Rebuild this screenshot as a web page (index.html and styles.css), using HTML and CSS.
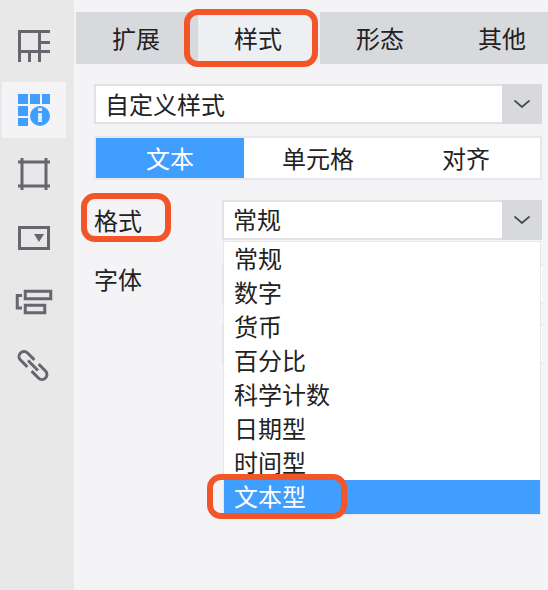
FILE: index.html
```html
<!DOCTYPE html>
<html lang="zh-CN">
<head>
<meta charset="UTF-8">
<title>样式设置</title>
<meta name="viewport" content="width=device-width, initial-scale=1">
<link rel="stylesheet" href="styles.css">
</head>

<body>
<div class="app">
  <div class="sidebar">
    <div class="side-item">
      <svg class="side-icon" viewBox="0 0 32 32"><path d="M1.5 32V1.5H32M21.5 1.5V32M21.5 12.5H32M0 21.5H32M11.5 21.5V32"/></svg>
    </div>
    <div class="side-item active">
      <svg class="side-icon" viewBox="0 0 32 32">
        <g class="fill-blue">
          <rect x="0" y="0" width="10" height="10"/>
          <rect x="12" y="0" width="10" height="10"/>
          <rect x="24" y="0" width="8" height="10"/>
          <rect x="0" y="12" width="10" height="10"/>
          <rect x="0" y="24" width="10" height="8"/>
          <circle cx="22" cy="22" r="10"/>
        </g>
        <g class="fill-pale">
          <rect x="20" y="14" width="4" height="3"/>
          <rect x="20" y="19" width="4" height="9"/>
        </g>
      </svg>
    </div>
    <div class="side-item">
      <svg class="side-icon" viewBox="0 0 32 32"><path d="M0 4H32M0 28H32M4 0V32M28 0V32"/></svg>
    </div>
    <div class="side-item">
      <svg class="side-icon" viewBox="0 0 32 32">
        <rect x="1.5" y="5.5" width="29" height="21"/>
        <polygon class="fill-gray" points="16,12 26,12 21,20"/>
      </svg>
    </div>
    <div class="side-item">
      <svg class="side-icon" viewBox="0 0 32 32">
        <rect x="7.25" y="5.25" width="25.5" height="7.5"/>
        <rect x="7.25" y="19.25" width="19.5" height="7.5"/>
        <path d="M4 9.5H-.75V22H4"/>
      </svg>
    </div>
    <div class="side-item">
      <svg class="side-icon" viewBox="0 0 32 32">
        <g transform="translate(-1 -.5) rotate(-45 16 16)">
          <path d="M11 13V3.3a5 5 0 0 1 10 0V13M11 19V28.7a5 5 0 0 0 10 0V19M16 9V23"/>
        </g>
      </svg>
    </div>
  </div>

  <div class="panel">
    <div class="tab-bar">
      <div class="tab">扩展</div>
      <div class="tab active">样式<span class="ring ring-tab"></span></div>
      <div class="tab">形态</div>
      <div class="tab">其他</div>
    </div>

    <div class="select style-select">
      <span class="select-text">自定义样式</span>
      <span class="select-arrow"><svg viewBox="0 0 16 8"><path d="M.5 .5L8 7L15.5 .5"/></svg></span>
    </div>

    <div class="sub-tabs">
      <div class="sub-tab active">文本</div>
      <div class="sub-tab">单元格</div>
      <div class="sub-tab">对齐</div>
    </div>

    <div class="form-row format-row">
      <div class="form-label">格式<span class="ring ring-label"></span></div>
      <div class="select">
        <span class="select-text">常规</span>
        <span class="select-arrow"><svg viewBox="0 0 16 8"><path d="M.5 .5L8 7L15.5 .5"/></svg></span>
        <ul class="dropdown">
          <li>常规</li>
          <li>数字</li>
          <li>货币</li>
          <li>百分比</li>
          <li>科学计数</li>
          <li>日期型</li>
          <li>时间型</li>
          <li class="active">文本型<span class="ring ring-item"></span></li>
        </ul>
      </div>
    </div>

    <div class="form-row font-row">
      <div class="form-label">字体</div>
      <div class="select"></div>
    </div>

    <div class="form-row size-row">
      <div class="form-label"></div>
      <div class="select"></div>
    </div>
  </div>
</div>
</body>
</html>
```

FILE: styles.css
```css
html, body {
  margin: 0;
  height: 100%;
  overflow: hidden;
}

body {
  font-family: "Noto Sans CJK SC", "Liberation Sans", sans-serif;
  font-size: 24px;
  color: #222;
  background: #f4f4f7;
}

.app {
  display: flex;
  height: 100vh;
  overflow: hidden;
}

/* left icon column */
.sidebar {
  flex: none;
  width: 74px;
  box-sizing: border-box;
  padding: 18px 0 0 2px;
  background: #e8e8e8;
  display: flex;
  flex-direction: column;
  gap: 8px;
  height: 100%;
}
.side-item {
  width: 64px;
  height: 56px;
  display: flex;
  justify-content: center;
  align-items: center;
}
.side-item.active {
  background: #f4f4f7;
}
.side-icon {
  width: 32px;
  height: 32px;
  overflow: visible;
  fill: none;
  stroke: #66666f;
  stroke-width: 3;
}
.fill-blue {
  fill: #409eff;
  stroke: none;
}
.fill-pale {
  fill: #d9ecff;
  stroke: none;
}
.fill-gray {
  fill: #66666f;
  stroke: none;
}

.panel {
  flex: 1;
  min-width: 0;
  padding: 12px 6px 0 20px;
}

/* top tabs */
.tab-bar {
  display: flex;
  height: 52px;
  margin: 0 -6px 0 -18px;
  background: #d8d9dd;
}
.tab {
  flex: none;
  width: 122px;
  box-sizing: border-box;
  padding: 0 2px 2px 0;
  position: relative;
  display: flex;
  justify-content: center;
  align-items: center;
}
.tab.active {
  background: #eeeff2;
}

/* orange annotation frames */
.ring {
  position: absolute;
  box-sizing: border-box;
  border: 6px solid #f25528;
  border-radius: 14px;
}
.ring-tab {
  left: -14px;
  top: -3px;
  width: 134px;
  height: 58px;
}
.ring-label {
  left: -13px;
  top: -7px;
  width: 90px;
  height: 49px;
}
.ring-item {
  left: -17px;
  top: -6px;
  width: 140px;
  height: 45px;
}

/* selects */
.select {
  position: relative;
  display: flex;
  height: 40px;
  box-sizing: border-box;
  background: #fff;
  border: 2px solid #e2e2e4;
  border-right: 0;
}
.style-select {
  margin-top: 20px;
}
.select-text {
  flex: 1;
  padding-left: 9px;
  line-height: 34px;
}
.style-select .select-text {
  line-height: 36px;
}
.select-arrow {
  flex: none;
  width: 40px;
  margin: -2px 0;
  background: #d8d9dd;
  display: flex;
  justify-content: center;
  align-items: center;
}
.select-arrow svg {
  width: 16px;
  height: 8px;
  fill: none;
  stroke: #44444c;
  stroke-width: 1.7;
}

.sub-tabs {
  display: grid;
  grid-template-columns: repeat(3, 148px);
  margin-top: 12px;
  background: #fff;
  border: 2px solid #e8e8ea;
}
.sub-tab {
  height: 40px;
  line-height: 40px;
  text-align: center;
}
.sub-tab.active {
  background: #409eff;
  color: #fff;
}

.form-row {
  display: grid;
  grid-template-columns: 128px 1fr;
}
.format-row {
  margin-top: 20px;
}
.font-row {
  margin-top: 24px;
}
.size-row {
  margin-top: 20px;
}
.form-label {
  position: relative;
  line-height: 40px;
}
.font-row .form-label {
  line-height: 30px;
}

/* open menu over the rows below */
.dropdown {
  position: absolute;
  z-index: 10;
  left: 0;
  right: 2px;
  top: 100%;
  margin: 4px 0 0;
  padding: 0;
  list-style: none;
  background: #fff;
  box-shadow: 0 0 0 1px #e8e8ec;
}
.dropdown li {
  position: relative;
  height: 34px;
  line-height: 32px;
  padding-left: 10px;
}
.dropdown li.active {
  background: #409eff;
  color: #fff;
}
```
